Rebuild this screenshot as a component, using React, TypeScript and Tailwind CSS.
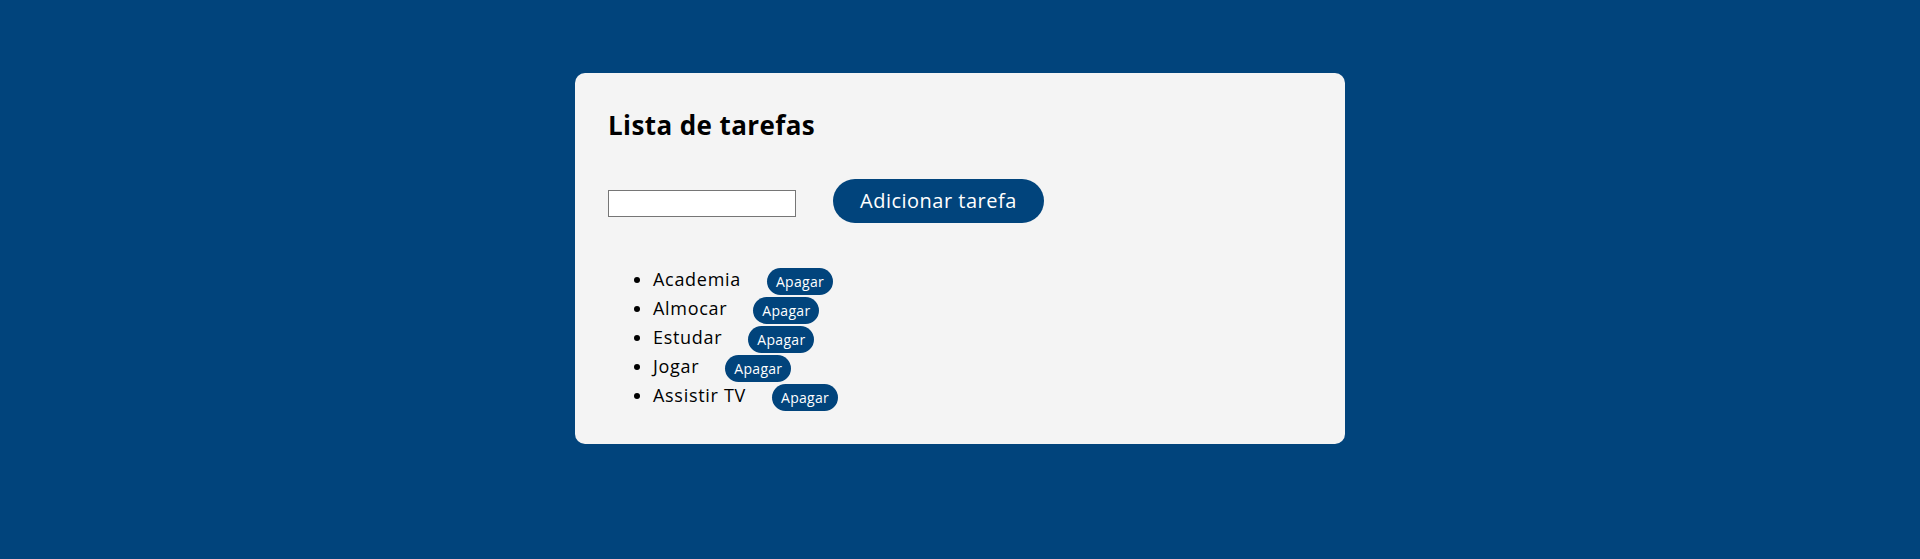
const tarefas = ["Academia", "Almocar", "Estudar", "Jogar", "Assistir TV"];

export default function App() {
  return (
    <div className="flex h-[559px] justify-center bg-[#01447c] pt-[73px] font-['Open_Sans',sans-serif]">
      <div className="h-fit w-[770px] rounded-[10px] bg-[#f4f4f4] px-[33px] pb-[34px] pt-[36px]">
        <h1 className="text-[26px] font-bold leading-[32px] tracking-[0.4px] text-black">Lista de tarefas</h1>

        {/* form */}
        <div className="mt-[38px] flex items-center gap-[37px]">
          <input type="text" className="mt-[5px] h-[27px] w-[188px] border border-[#767676] bg-white" />
          <button className="h-[44px] rounded-full bg-[#01447c] px-[27px] text-[20px] tracking-[0.5px] text-white">
            Adicionar tarefa
          </button>
        </div>

        {/* lista */}
        <ul className="mt-[42px] list-disc pl-[45px]">
          {tarefas.map((t) => (
            <li key={t} className="h-[29px] text-[18px] leading-[29px] tracking-[0.7px] text-black">
              {t}
              <button className="ml-[26px] h-[27px] rounded-full bg-[#01447c] px-[9px] align-middle text-[14px] leading-[27px] tracking-[0.3px] text-white">
                Apagar
              </button>
            </li>
          ))}
        </ul>
      </div>
    </div>
  );
}
